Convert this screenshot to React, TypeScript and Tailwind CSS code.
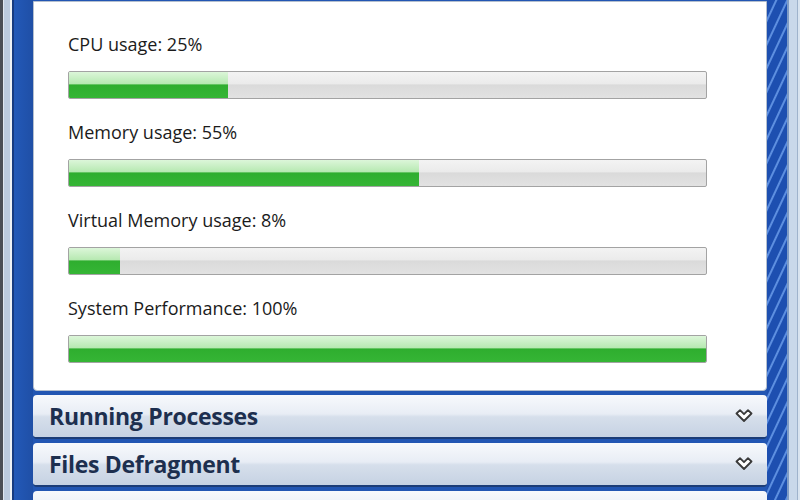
import React from 'react';

interface MeterProps {
    label: string;
    value: number;
}

const Meter: React.FC<MeterProps> = ({ label, value }) => {
    return (
        <div className="flex flex-col">
            <p className="h-[22px] text-[18px] leading-[22px] text-[#1b1b1b]">{label}</p>
            <div className="mt-4 h-[28px] w-[639px] overflow-hidden rounded-[2px] border border-[#a3a3a3] bg-[linear-gradient(to_bottom,#f3f3f3_0%,#ebebeb_45%,#dadada_50%,#e2e2e2_100%)]">
                <div
                    className="h-full bg-[linear-gradient(to_bottom,#dcf6d9_0%,#b7e9b2_45%,#2fae2f_50%,#35b535_100%)]"
                    style={{ width: `${value}%` }}
                />
            </div>
        </div>
    );
};

const Chevron = () => (
    <svg width="18" height="14" viewBox="0 0 18 14" className="shrink-0">
        <path d="M1.5 4.5 L5 1.2 L9 5.2 L13 1.2 L16.5 4.5 L9 12 Z" fill="#ffffff" stroke="#3a3a3a" strokeWidth="1.8" strokeLinejoin="round" />
    </svg>
);

const Section: React.FC<{ title?: string }> = ({ title }) => (
    <div className="flex h-[44px] shrink-0 items-center justify-between rounded-[4px] border-b-2 border-[#1c3d78] bg-[linear-gradient(to_bottom,#f7f9fc_0%,#e8edf5_45%,#d6dfeb_52%,#c6d2e3_100%)] pl-4 pr-[14px]">
        <span className="text-[23px] font-bold tracking-[-0.3px] text-[#1d2f4f]">{title}</span>
        <Chevron />
    </div>
);

export default function App() {
    return (
        <div className="flex h-[500px] w-[800px] overflow-hidden bg-[#2256b3] font-['Open_Sans','Noto_Sans',sans-serif]">
            {/* left window frame */}
            <div className="flex w-[33px] shrink-0">
                <div className="w-[3px] bg-[#4b4e54]" />
                <div className="w-[1px] bg-[#dfe6ee]" />
                <div className="w-[6px] bg-[#bccbdd]" />
                <div className="w-[2px] bg-[#eef2f7]" />
                <div className="w-[2px] bg-[#173b80]" />
                <div className="flex-1 bg-[linear-gradient(to_right,#2359b8,#1f4fa6)]" />
            </div>

            <div className="flex w-[734px] shrink-0 flex-col gap-1 pt-[1px]">
                <div className="flex h-[390px] shrink-0 flex-col gap-[22px] rounded-b-[4px] border border-[#b4bfce] bg-white pl-[34px] pt-[31px]">
                    <Meter label="CPU usage: 25%" value={25} />
                    <Meter label="Memory usage: 55%" value={55} />
                    <Meter label="Virtual Memory usage: 8%" value={8} />
                    <Meter label="System Performance: 100%" value={100} />
                </div>
                <Section title="Running Processes" />
                <Section title="Files Defragment" />
                <Section />
            </div>

            {/* right window frame */}
            <div className="flex w-[33px] shrink-0">
                <div className="w-[20px] bg-[#1f52b2] bg-[repeating-linear-gradient(115deg,#1d4fb0_0px,#1d4fb0_7px,#5d8fe0_8px,#5d8fe0_9px,#1d4fb0_10px)]" />
                <div className="w-[2px] bg-[#7f9cc6]" />
                <div className="w-[8px] bg-[#c9d8ea]" />
                <div className="w-[1px] bg-[#9fb3cc]" />
                <div className="flex-1 bg-[#d9e4f0]" />
            </div>
        </div>
    );
}
